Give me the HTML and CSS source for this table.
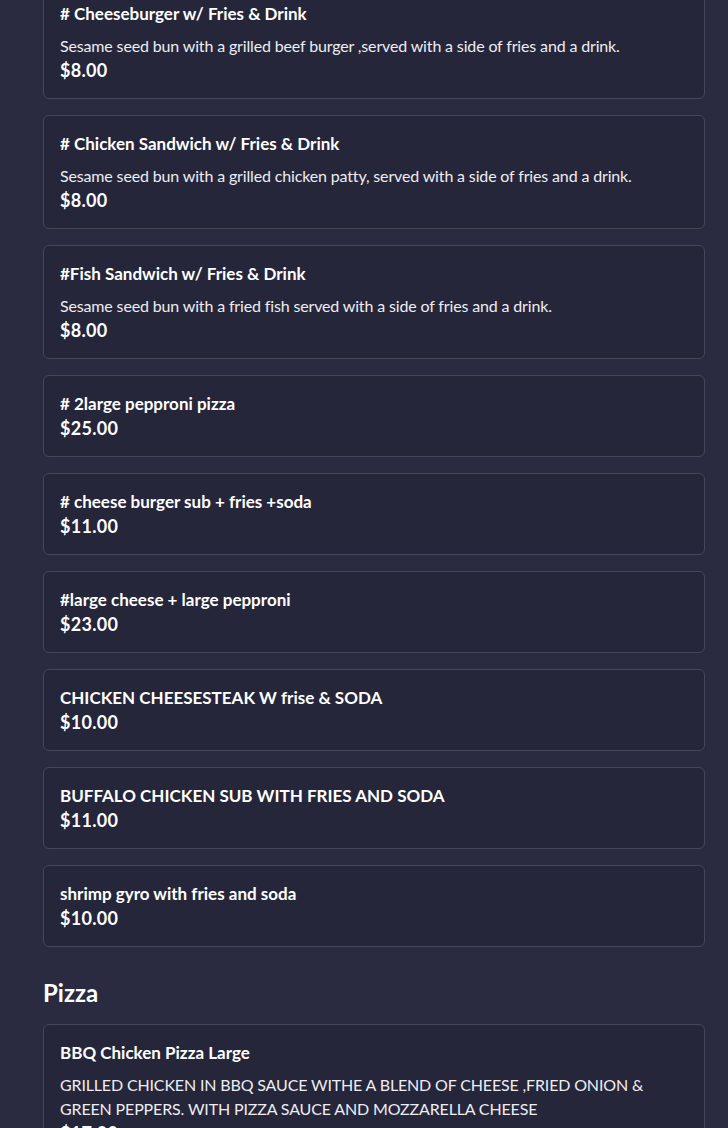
FILE: index.html
```html
<!DOCTYPE html>
<html>
<head>
<meta charset="utf-8">
<link rel="stylesheet" href="styles.css">
</head>
<body>
<main class="menu">
  <section class="items">
    <article class="card">
      <h3 class="title"># Cheeseburger w/ Fries &amp; Drink</h3>
      <p class="desc">Sesame seed bun with a grilled beef burger ,served with a side of fries and a drink.</p>
      <p class="price">$8.00</p>
    </article>
    <article class="card">
      <h3 class="title"># Chicken Sandwich w/ Fries &amp; Drink</h3>
      <p class="desc">Sesame seed bun with a grilled chicken patty, served with a side of fries and a drink.</p>
      <p class="price">$8.00</p>
    </article>
    <article class="card">
      <h3 class="title">#Fish Sandwich w/ Fries &amp; Drink</h3>
      <p class="desc">Sesame seed bun with a fried fish served with a side of fries and a drink.</p>
      <p class="price">$8.00</p>
    </article>
    <article class="card">
      <h3 class="title"># 2large pepproni pizza</h3>
      <p class="price">$25.00</p>
    </article>
    <article class="card">
      <h3 class="title"># cheese burger sub + fries +soda</h3>
      <p class="price">$11.00</p>
    </article>
    <article class="card">
      <h3 class="title">#large cheese + large pepproni</h3>
      <p class="price">$23.00</p>
    </article>
    <article class="card">
      <h3 class="title">CHICKEN CHEESESTEAK W frise &amp; SODA</h3>
      <p class="price">$10.00</p>
    </article>
    <article class="card">
      <h3 class="title">BUFFALO CHICKEN SUB WITH FRIES AND SODA</h3>
      <p class="price">$11.00</p>
    </article>
    <article class="card">
      <h3 class="title">shrimp gyro with fries and soda</h3>
      <p class="price">$10.00</p>
    </article>
  </section>
  <section class="items">
    <h2 class="section-title">Pizza</h2>
    <article class="card">
      <h3 class="title">BBQ Chicken Pizza Large</h3>
      <p class="desc">GRILLED CHICKEN IN BBQ SAUCE WITHE A BLEND OF CHEESE ,FRIED ONION &amp; GREEN PEPPERS. WITH PIZZA SAUCE AND MOZZARELLA CHEESE</p>
      <p class="price">$17.00</p>
    </article>
  </section>
</main>
</body>
</html>
```

FILE: styles.css
```css
html, body {
  margin: 0;
  padding: 0;
  background: #2a2b40;
  color: #ffffff;
  font-family: "Lato", "Noto Sans", sans-serif;
  height: 1128px;
  overflow: hidden;
}

.menu {
  padding: 0 23px 0 43px;
  margin-top: -15px;
}

.items {
  display: flex;
  flex-direction: column;
}

.card {
  background: #25263a;
  border: 1px solid #45465a;
  border-radius: 6px;
  padding: 16px 16px;
  margin-bottom: 16px;
}

.title {
  margin: 0;
  font-size: 17px;
  line-height: 24px;
  font-weight: 700;
  color: #ffffff;
}

.desc {
  margin: 8px 0 0;
  font-size: 16px;
  line-height: 24px;
  font-weight: 400;
  letter-spacing: -0.15px;
  color: #ededf2;
}

.price {
  margin: 0;
  font-size: 18px;
  line-height: 24px;
  font-weight: 700;
  letter-spacing: 0.3px;
  color: #ffffff;
}

.section-title {
  margin: 14px 0 15px;
  font-size: 24px;
  line-height: 32px;
  font-weight: 700;
}
```
